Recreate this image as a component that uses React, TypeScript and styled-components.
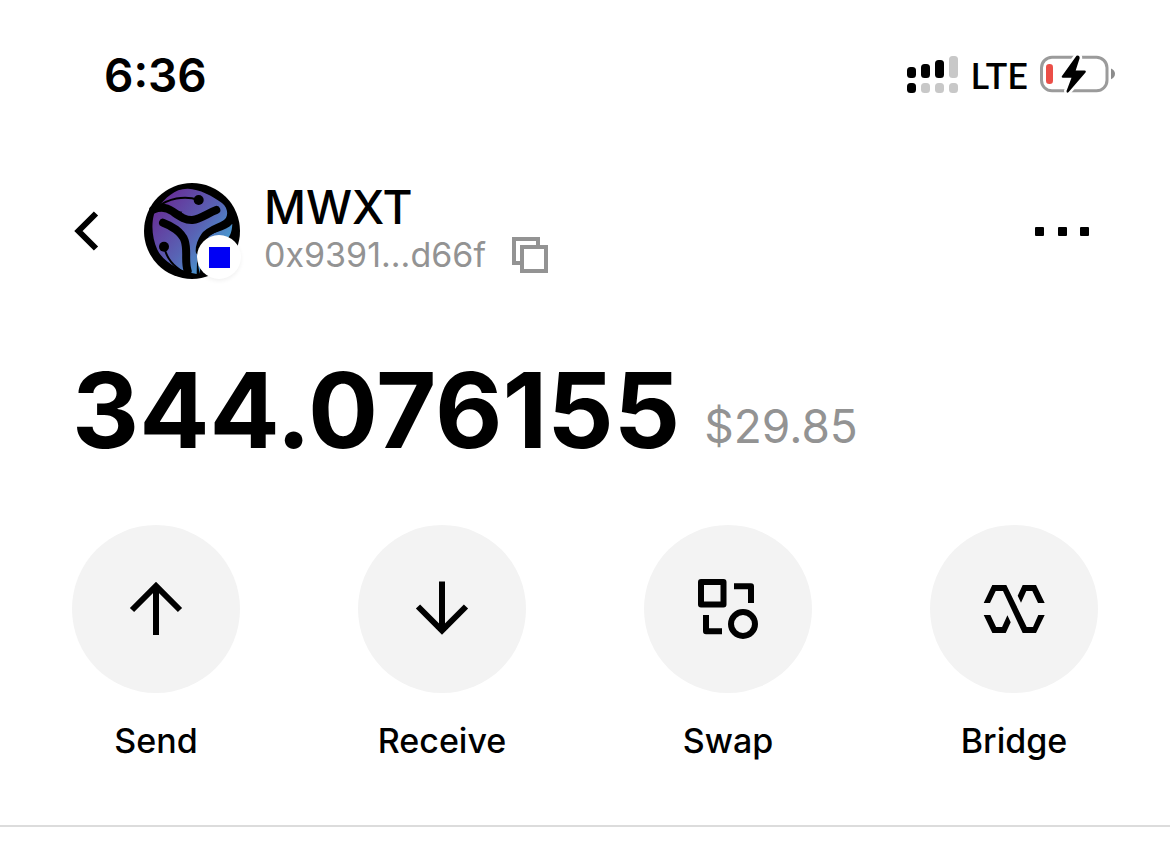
import React from "react";
import styled, { createGlobalStyle } from "styled-components";

const GlobalStyle = createGlobalStyle`
  * { box-sizing: border-box; }
  body { margin: 0; background: #fff; color: #000; font-family: Inter, "Liberation Sans", sans-serif; }
  button { border: 0; padding: 0; background: none; color: inherit; font: inherit; cursor: pointer; }
  svg { display: block; }
`;

const Screen = styled.main`
  min-height: 100vh;
`;

const StatusBar = styled.div`
  display: flex;
  align-items: center;
  justify-content: space-between;
  height: 150px;
  padding: 0 54px 0 104px;
`;

const Time = styled.time`
  font-size: 46px;
  line-height: 56px;
  font-weight: 600;
`;

const StatusIcons = styled.div`
  display: flex;
  align-items: center;
  gap: 12px;
`;

const Network = styled.span`
  font-family: Lato, "Open Sans", sans-serif;
  font-size: 36px;
  line-height: 40px;
  font-weight: 600;
`;

const Header = styled.header`
  display: flex;
  align-items: center;
  padding: 33px 72px 0;
`;

const BackButton = styled.button`
  width: 72px;
  height: 48px;
`;

const Avatar = styled.div`
  position: relative;
  width: 96px;
  height: 96px;
`;

const ChainBadge = styled.span`
  position: absolute;
  right: -1px;
  bottom: 0;
  display: grid;
  place-items: center;
  width: 44px;
  height: 44px;
  border-radius: 50%;
  background: #fff;
  box-shadow: 0 2px 4px rgba(0, 0, 0, 0.06);

  &::after {
    content: "";
    width: 21px;
    height: 21px;
    background: #0000f5;
  }
`;

const TokenInfo = styled.div`
  flex: 1;
  padding-left: 24px;
`;

const TokenName = styled.h1`
  margin: 0;
  font-size: 46px;
  line-height: 48px;
  font-weight: 500;
`;

const AddressRow = styled.div`
  display: flex;
  align-items: center;
  gap: 26px;
  height: 48px;
  color: #939393;
  font-size: 34px;
  line-height: 48px;
`;

const MoreButton = styled.button`
  padding: 20px 8px;
`;

const Balance = styled.section`
  display: flex;
  align-items: flex-end;
  gap: 24px;
  padding: 67px 72px 0;
`;

const Amount = styled.strong`
  font-size: 104px;
  line-height: 128px;
  font-weight: 700;
`;

const Fiat = styled.span`
  padding-bottom: 20px;
  font-size: 46px;
  line-height: 56px;
  color: #939393;
`;

const Actions = styled.nav`
  display: flex;
  justify-content: space-between;
  padding: 51px 72px 60px;
  border-bottom: 2px solid #dcdcdc;
`;

const ActionButton = styled.button`
  display: flex;
  flex-direction: column;
  align-items: center;
  gap: 24px;
  width: 168px;
  font-size: 34px;
  line-height: 48px;
  font-weight: 500;
`;

const ActionCircle = styled.span`
  display: grid;
  place-items: center;
  width: 168px;
  height: 168px;
  border-radius: 50%;
  background: #f3f3f3;
`;

const SignalIcon = () => (
  <svg width="52" height="38" viewBox="0 0 52 38" aria-hidden="true">
    <rect x="0" y="11" width="9" height="11" rx="3.5" />
    <rect x="14" y="8" width="9" height="14" rx="3.5" />
    <rect x="28" y="4" width="9" height="18" rx="3.5" />
    <rect x="42" y="0" width="9" height="22" rx="3.5" fill="#c8c8c8" />
    <rect x="0" y="27" width="9" height="10" rx="3.5" />
    <g fill="#c8c8c8">
      <rect x="14" y="27" width="9" height="10" rx="3.5" />
      <rect x="28" y="27" width="9" height="10" rx="3.5" />
      <rect x="42" y="27" width="9" height="10" rx="3.5" />
    </g>
  </svg>
);

const BatteryIcon = () => (
  <svg width="76" height="40" viewBox="0 0 76 40" aria-hidden="true">
    <rect x="1.5" y="2.3" width="65.5" height="33.500" rx="10.5" fill="none" stroke="#9b9b9b" strokeWidth="3" />
    <path d="M71 13.500c2.600 1 4 3 4 5.300s-1.400 4.500-4 5.500z" fill="#8c8c8c" />
    <rect x="6" y="9" width="7" height="20" rx="3.300" fill="#eb4e47" />
    <path
      d="M36.500.8 22 21q-.9 1.700 1 1.700h8.500l-5 13.300q0 2.800 2.200 1L45.500 17.500q1-2-1-2h-8.800l4-12.500q0-3.500-3.200-2.200z"
      stroke="#fff"
      strokeWidth="5"
      paintOrder="stroke"
    />
  </svg>
);

const TokenLogo = () => (
  <svg width="96" height="96" viewBox="0 0 288 288" role="img" aria-label="MWXT">
    <defs>
      <linearGradient id="tokenFill" x1="60" y1="60" x2="270" y2="230" gradientUnits="userSpaceOnUse">
        <stop offset="0" stopColor="#663399" />
        <stop offset=".48" stopColor="#5864b5" />
        <stop offset="1" stopColor="#3fb4dc" />
      </linearGradient>
    </defs>
    <circle cx="144" cy="144" r="144" />
    <path d="M38 76C66 44 92 16 132 17c34 1 74 22 102 43 20 16 20 42 4 55-24 20-57 26-67 59-12 33-12 63-13 99-42-7-98-31-118-73-15-34-19-73-10-106 5-16 18-18 34-11l24 13c12 5 20 1 27-10z" fill="url(#tokenFill)" />
    <path d="M265 122c-1 28-9 44-25 53-30 17-56 18-65 44-5 15-7 34-7 53-12-38-8-78 10-101 20-25 68-25 87-49z" fill="url(#tokenFill)" />
    <g fill="none" stroke="#000" strokeLinecap="round">
      <path d="M28 80c24-10 40-7 57 5 22 15 37 27 60 26 25-3 46-20 72-30" strokeWidth="24" />
      <path d="M57 119c25 9 56 28 65 54 10 31-1 59 9 91" strokeWidth="24" />
      <path d="M258 109c-16 24-59 25-77 51-12 17-15 28-15 44" strokeWidth="22" />
      <path d="M164 51C120 36 72 47 38 74" strokeWidth="6" />
      <path d="M60 191c8 38 30 58 57 76" strokeWidth="6" />
    </g>
    <circle cx="164" cy="51" r="15" />
    <circle cx="60" cy="191" r="15" />
  </svg>
);

const BackIcon = () => (
  <svg width="28" height="48" viewBox="0 0 28 48" aria-hidden="true">
    <path d="M24 6.500 6.500 24 24 41.500" fill="none" stroke="#000" strokeWidth="6" />
  </svg>
);

const CopyIcon = () => (
  <svg width="36" height="36" viewBox="0 0 36 36" fill="none" stroke="#939393" strokeWidth="4" aria-hidden="true">
    <path d="M26 8V2H2v24h6" />
    <path d="M10 10h24v24H10z" />
  </svg>
);

const MoreIcon = () => (
  <svg width="55" height="9" viewBox="0 0 55 9" aria-hidden="true">
    <rect width="9" height="9" rx="1" />
    <rect x="23" width="9" height="9" rx="1" />
    <rect x="45" width="9" height="9" rx="1" />
  </svg>
);

const Glyph = ({ children }: { children: React.ReactNode }) => (
  <svg width="72" height="72" viewBox="0 0 72 72" fill="none" stroke="#000" strokeWidth="6" strokeLinejoin="round" aria-hidden="true">
    {children}
  </svg>
);

const actions = [
  {
    label: "Send",
    icon: <path d="M36 62V13M12 37l24-24 24 24" strokeLinejoin="miter" />,
  },
  {
    label: "Receive",
    icon: <path d="M36 8.500V57M12 33.500l24 24 24-24" strokeLinejoin="miter" />,
  },
  {
    label: "Swap",
    icon: (
      <>
        <path d="M9 9h22.500v22.500H9z" />
        <path d="M42 13.200h17V30M14 42v16.200h16" />
        <circle cx="51" cy="51" r="12" />
      </>
    ),
  },
  {
    label: "Bridge",
    icon: (
      <g fill="#000" stroke="none">
        <path d="M5.700 30 14.300 12h14L48.700 54H55l5.300-12h6.400L58 60H44.700L25 18h-7.300L12 30z" />
        <path d="M39.700 22.700 44.700 12H58l8.700 18H60l-5.700-12h-6L43 29.700z" />
        <path d="M39.700 22.700 44.700 12H58l8.700 18H60l-5.700-12h-6L43 29.700z" transform="rotate(180 36.200 36)" />
      </g>
    ),
  },
];

export default function App() {
  return (
    <>
      <GlobalStyle />
      <Screen>
        <StatusBar>
          <Time>6:36</Time>
          <StatusIcons>
            <SignalIcon />
            <Network>LTE</Network>
            <BatteryIcon />
          </StatusIcons>
        </StatusBar>
        <Header>
          <BackButton aria-label="Back">
            <BackIcon />
          </BackButton>
          <Avatar>
            <TokenLogo />
            <ChainBadge />
          </Avatar>
          <TokenInfo>
            <TokenName>MWXT</TokenName>
            <AddressRow>
              <span>0x9391...d66f</span>
              <button aria-label="Copy address">
                <CopyIcon />
              </button>
            </AddressRow>
          </TokenInfo>
          <MoreButton aria-label="More options">
            <MoreIcon />
          </MoreButton>
        </Header>
        <Balance>
          <Amount>344.076155</Amount>
          <Fiat>$29.85</Fiat>
        </Balance>
        <Actions aria-label="Token actions">
          {actions.map(({ label, icon }) => (
            <ActionButton key={label}>
              <ActionCircle>
                <Glyph>{icon}</Glyph>
              </ActionCircle>
              {label}
            </ActionButton>
          ))}
        </Actions>
      </Screen>
    </>
  );
}
